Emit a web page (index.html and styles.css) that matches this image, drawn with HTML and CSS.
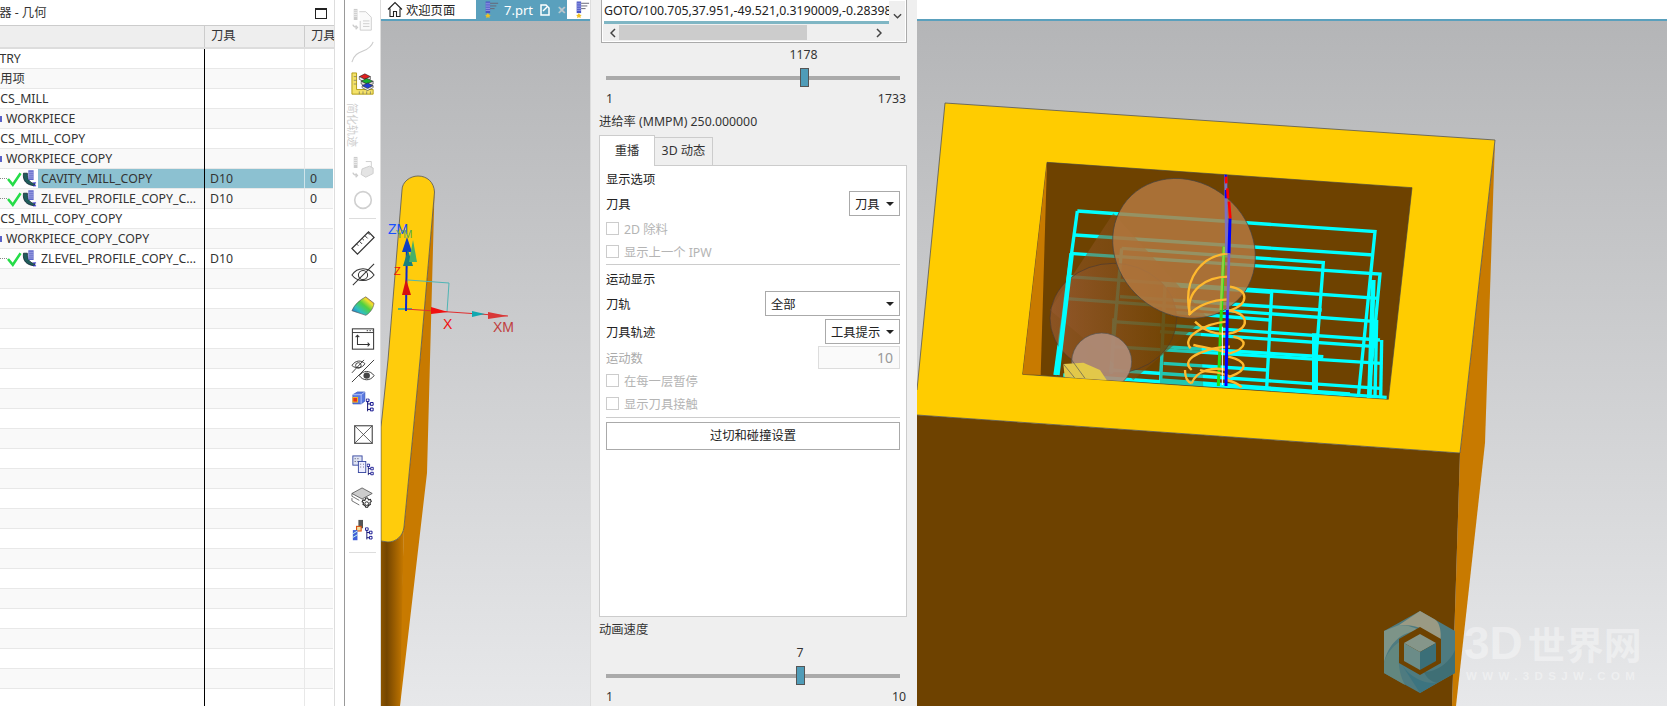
FILE: index.html
```html
<!DOCTYPE html>
<html lang="zh-CN">
<head>
<meta charset="utf-8">
<title>NX CAM</title>
<link rel="stylesheet" href="styles.css">
</head>
<body>
<svg class="defs" width="0" height="0" aria-hidden="true">
  <symbol id="op" viewBox="0 0 32 18">
    <path d="M1 9l5 6L14 3" fill="none" stroke="#25dc48" stroke-width="2.600"/>
    <path d="M17 3c-1 8 3 12 11 13l1-2c-5-1-8-4-8-11z" fill="#1f5d5a" stroke="#123" stroke-width=".8"/>
    <rect x="22" y="0" width="5.500" height="10" fill="#5a62c8"/>
    <path d="M22 2h5.500M22 4h5.500M22 6h5.500M22 8h5.500" stroke="#c8ccf0" stroke-width=".7"/>
    <path d="M27 13h3M27 16h3" stroke="#22c" stroke-width="1"/>
  </symbol>
  <symbol id="prt" viewBox="0 0 18 20">
    <rect x="3" y="1" width="5" height="13" fill="#4a55c4"/>
    <path d="M3 3h5M3 5h5M3 7h5M3 9h5M3 11h5" stroke="#aab0ee" stroke-width=".8"/>
    <path d="M8 3h9M8 6h7M8 9h5" stroke="#667" stroke-width="1.100"/>
    <path d="M5.500 14l1.200 2 2 .3-1.500 1.400.4 2-2.100-1-2.100 1 .4-2-1.500-1.400 2-.3z" fill="#f0c020"/>
  </symbol>
  <symbol id="tree" viewBox="0 0 9 16">
    <path d="M2 1v13M2 6h3M2 12h3" fill="none" stroke="#006" stroke-width="1"/>
    <path d="M0.500 .5h3v3h-3zM5 4.500h3v3H5zM5 10.500h3v3H5z" fill="#fff" stroke="#008" stroke-width="1"/>
  </symbol>
</svg>

<div class="app">
  <section class="nav">
    <header class="nav-title">
      <span class="nav-title-text">工序导航器 - 几何</span>
      <span class="maximize"></span>
    </header>
    <div class="tree-head">
      <div class="head-cell"></div>
      <div class="head-cell head-col">刀具</div>
      <div class="head-cell head-col">刀具</div>
    </div>
    <div class="tree">
      <div class="row"><div class="name"><span class="cut-geo">GEOMETRY</span></div><div class="col"></div><div class="col"></div></div>
      <div class="row"><div class="name"><span class="cut-unused">未用项</span></div><div class="col"></div><div class="col"></div></div>
      <div class="row"><div class="name"><span class="cut-mcs">MCS_MILL</span></div><div class="col"></div><div class="col"></div></div>
      <div class="row"><div class="name"><i class="wp"></i>WORKPIECE</div><div class="col"></div><div class="col"></div></div>
      <div class="row"><div class="name"><span class="cut-mcs">MCS_MILL_COPY</span></div><div class="col"></div><div class="col"></div></div>
      <div class="row"><div class="name"><i class="wp"></i>WORKPIECE_COPY</div><div class="col"></div><div class="col"></div></div>
      <div class="row selected"><div class="name"><i class="dots"></i><svg class="op"><use href="#op"/></svg><span class="op-label">CAVITY_MILL_COPY</span></div><div class="col">D10</div><div class="col">0</div></div>
      <div class="row"><div class="name"><i class="dots"></i><svg class="op"><use href="#op"/></svg><span class="op-label">ZLEVEL_PROFILE_COPY_C...</span></div><div class="col">D10</div><div class="col">0</div></div>
      <div class="row"><div class="name"><span class="cut-mcs">MCS_MILL_COPY_COPY</span></div><div class="col"></div><div class="col"></div></div>
      <div class="row"><div class="name"><i class="wp"></i>WORKPIECE_COPY_COPY</div><div class="col"></div><div class="col"></div></div>
      <div class="row"><div class="name"><i class="dots"></i><svg class="op"><use href="#op"/></svg><span class="op-label">ZLEVEL_PROFILE_COPY_C...</span></div><div class="col">D10</div><div class="col">0</div></div>
      <div class="row"><div class="name"></div><div class="col"></div><div class="col"></div></div>
      <div class="row"><div class="name"></div><div class="col"></div><div class="col"></div></div>
      <div class="row"><div class="name"></div><div class="col"></div><div class="col"></div></div>
      <div class="row"><div class="name"></div><div class="col"></div><div class="col"></div></div>
      <div class="row"><div class="name"></div><div class="col"></div><div class="col"></div></div>
      <div class="row"><div class="name"></div><div class="col"></div><div class="col"></div></div>
      <div class="row"><div class="name"></div><div class="col"></div><div class="col"></div></div>
      <div class="row"><div class="name"></div><div class="col"></div><div class="col"></div></div>
      <div class="row"><div class="name"></div><div class="col"></div><div class="col"></div></div>
      <div class="row"><div class="name"></div><div class="col"></div><div class="col"></div></div>
      <div class="row"><div class="name"></div><div class="col"></div><div class="col"></div></div>
      <div class="row"><div class="name"></div><div class="col"></div><div class="col"></div></div>
      <div class="row"><div class="name"></div><div class="col"></div><div class="col"></div></div>
      <div class="row"><div class="name"></div><div class="col"></div><div class="col"></div></div>
      <div class="row"><div class="name"></div><div class="col"></div><div class="col"></div></div>
      <div class="row"><div class="name"></div><div class="col"></div><div class="col"></div></div>
      <div class="row"><div class="name"></div><div class="col"></div><div class="col"></div></div>
      <div class="row"><div class="name"></div><div class="col"></div><div class="col"></div></div>
      <div class="row"><div class="name"></div><div class="col"></div><div class="col"></div></div>
      <div class="row"><div class="name"></div><div class="col"></div><div class="col"></div></div>
      <div class="row"><div class="name"></div><div class="col"></div><div class="col"></div></div>
      <div class="row"><div class="name"></div><div class="col"></div><div class="col"></div></div>
    </div>
  </section>

  <div class="spacer"></div>

  <aside class="toolbar">
    <div class="tool"><svg viewBox="0 0 26 26"><rect x="3" y="1" width="4" height="12" fill="#ccc"/><path d="M3 3h4M3 5h4M3 7h4M3 9h4" stroke="#eee"/><path d="M9 4h7l6 6v14H10V14" fill="#fafafa" stroke="#ccc"/><path d="M13 14h7M13 17h7M13 20h7" stroke="#ccc"/><path d="M2 18c1 3 3 3 5 3M5 23l2-2-2-2" fill="none" stroke="#ccc" stroke-width="1.400"/></svg></div>
    <div class="tool"><svg viewBox="0 0 26 26"><path d="M1 24C3 16 8 14 13 12s9-4 11-10" fill="none" stroke="#ccc" stroke-width="1.200"/></svg></div>
    <div class="tool"><svg viewBox="0 0 26 26"><path d="M1 1h5v18h18v5H1z" fill="#f4e26a" stroke="#b09a10"/><path d="M3 5h3M3 9h3M3 13h3M9 21v3M13 21v3M17 21v3M21 21v3" stroke="#666" stroke-width=".7"/><path d="M9 5l6-3 6 3-6 3z" fill="#e02020" stroke="#222" stroke-width=".6"/><path d="M9 5v3l6 3 6-3V5l-6 3z" fill="#e8e8e8" stroke="#222" stroke-width=".6"/><path d="M11 10l6-3 7 3-7 3z" fill="#18b030" stroke="#222" stroke-width=".6"/><path d="M11 10v3l6 3 7-3v-3l-7 3z" fill="#ddd" stroke="#222" stroke-width=".6"/><path d="M12 15l6-3 6 3-6 3z" fill="#2040d0" stroke="#222" stroke-width=".6"/><path d="M12 15v2l6 3 6-3v-2l-6 3z" fill="#fff" stroke="#222" stroke-width=".6"/></svg></div>
    <div class="tool tool-text">简化轨迹</div>
    <div class="tool tool-after-text"><svg viewBox="0 0 26 26"><rect x="3" y="1" width="4" height="12" fill="#ccc"/><path d="M3 3h4M3 5h4M3 7h4M3 9h4" stroke="#eee"/><path d="M12 14l8-3 4 2v6l-8 4-5-3z" fill="#e4e4e4" stroke="#ccc"/><path d="M16 6h6v6" fill="none" stroke="#ccc"/><path d="M2 18c1 3 3 3 5 3M5 23l2-2-2-2" fill="none" stroke="#ccc" stroke-width="1.400"/></svg></div>
    <div class="tool"><svg viewBox="0 0 26 26"><circle cx="13" cy="13" r="9" fill="none" stroke="#d0d0d0" stroke-width="1.800"/></svg></div>
    <div class="tb-sep"></div>
    <div class="tool tool-after-sep"><svg viewBox="0 0 26 26"><path d="M1 19L19 1l6 6L7 25z" fill="#fff" stroke="#333" stroke-width="1.300"/><path d="M6 14l2 2M9 11l3 3M12 8l2 2M15 5l3 3M18 2l2 2" stroke="#333"/></svg></div>
    <div class="tool"><svg viewBox="0 0 26 26"><path d="M1 13c6-9 18-9 24 0-6 8-18 8-24 0z" fill="none" stroke="#333" stroke-width="1.100"/><circle cx="13" cy="13" r="5" fill="none" stroke="#333" stroke-width="1.100"/><path d="M2 24L25 1" stroke="#333" stroke-width="1.100"/></svg></div>
    <div class="tool"><svg viewBox="0 0 26 26"><defs><linearGradient id="rb" x1="0" y1="1" x2="1" y2="0"><stop offset="0" stop-color="#2a50d0"/><stop offset=".3" stop-color="#30c0c0"/><stop offset=".55" stop-color="#50d040"/><stop offset=".75" stop-color="#f0e030"/><stop offset="1" stop-color="#e85020"/></linearGradient></defs><path d="M1 17C4 10 10 5 16 2l9 7c-1 6-5 11-9 13-5-2-10-3-15-5z" fill="url(#rb)" stroke="#555" stroke-width=".7"/></svg></div>
    <div class="tool"><svg viewBox="0 0 26 26"><rect x="1.500" y="2" width="23" height="22" fill="#fff" stroke="#333" stroke-width="1.100"/><path d="M1.500 6h23" stroke="#333"/><path d="M17 4h1.500M20 4h1.500M23 4h.5" stroke="#333"/><path d="M7 9v10h13M5 11l2-2 2 2M18 17l2 2-2 2" fill="none" stroke="#333" stroke-width="1.100"/></svg></div>
    <div class="tool"><svg viewBox="0 0 26 26"><path d="M1 7c4-6 10-6 14-2-2 5-10 6-14 2z" fill="none" stroke="#333"/><circle cx="8" cy="7" r="3" fill="none" stroke="#333"/><path d="M1 15L14 1M1 25L25 1" stroke="#333"/><path d="M9 18c4-6 12-6 16 0-4 6-12 6-16 0z" fill="#fff" stroke="#333"/><circle cx="17" cy="18" r="3.500" fill="#444"/></svg></div>
    <div class="tool"><svg viewBox="0 0 26 26"><path d="M2 4l5-3h8v10l-4 3H2z" fill="#5a78e0" stroke="#3050b0" stroke-width=".7"/><path d="M2 4h9v10M11 4l4-3" fill="none" stroke="#d0dcff" stroke-width=".8"/><rect x="2" y="7" width="5" height="5" fill="#e83020" stroke="#f0c020"/><use href="#tree" x="16" y="8" width="9" height="16"/></svg></div>
    <div class="tool"><svg viewBox="0 0 26 26"><rect x="4" y="3" width="19" height="19" fill="#fff" stroke="#444" stroke-width="1.200"/><path d="M4 3l19 19M23 3L4 22" stroke="#444" stroke-width=".9"/></svg></div>
    <div class="tool"><svg viewBox="0 0 26 26"><rect x="2" y="1" width="10" height="10" fill="#dfe4f4" stroke="#3848a0"/><path d="M4 4h1M7 4h1M4 7h1M7 7h1" stroke="#334"/><rect x="8" y="7" width="8" height="12" fill="#eef" stroke="#3848a0"/><path d="M10 10h1M13 10h1M10 13h1M13 13h1" stroke="#667"/><use href="#tree" x="17" y="9" width="8" height="15"/></svg></div>
    <div class="tool"><svg viewBox="0 0 26 26"><path d="M1 7l11-6 11 6-11 6z" fill="#ccc" stroke="#444" stroke-width=".8"/><path d="M1 7v3l8 4.500M1 12v3l8 4.500" fill="none" stroke="#444" stroke-width=".8"/><path d="M18 12l1 2 2-.5 1 2-1.500 1.500.5 2-2 1-1 2h-2l-1-2-2-1 .5-2L12 16l1-2 2 .5 1-2.500z" fill="#fff" stroke="#222" stroke-width="1.100"/><circle cx="17" cy="18" r="2" fill="#fff" stroke="#222" stroke-width="1"/></svg></div>
    <div class="tool"><svg viewBox="0 0 26 26"><path d="M8 1h5v9H8z" fill="#555"/><rect x="6" y="8" width="5" height="5" fill="#f0e0a0" stroke="#d85010" stroke-width="1.200"/><path d="M2 12h5v11H2z" fill="#4060d8"/><path d="M2 16l5-3M2 20l5-3" stroke="#cfe" /><use href="#tree" x="15" y="9" width="9" height="15"/></svg></div>
    <div class="tb-sep tb-sep-last"></div>
  </aside>

  <main class="main">
    <div class="tabs">
      <div class="tab">
        <svg class="home" viewBox="0 0 16 16"><path d="M1 8l7-7 7 7M3 7v8h3.500v-5h3v5H13V7" fill="none" stroke="#222" stroke-width="1.100"/></svg>
        <span>欢迎页面</span>
      </div>
      <div class="tab tab-active">
        <svg class="prt"><use href="#prt"/></svg>
        <span class="tab-name">7.prt</span>
        <svg class="tab-doc" viewBox="0 0 10 12"><path d="M1 1h5l3 3v7H1z" fill="none" stroke="#fff" stroke-width="1.500"/><path d="M3 7l4-4" stroke="#fff" stroke-width="1.500"/></svg>
        <span class="tab-x">✕</span>
      </div>
      <div class="tab tab-last"><svg class="prt"><use href="#prt"/></svg></div>
    </div>

    <div class="viewport">
      <svg class="scene" viewBox="381 21 1286 685" width="1286" height="685">
        <defs>
          <linearGradient id="cyl" x1="0" x2="1" y1="0" y2="0"><stop offset="0" stop-color="#8a5400"/><stop offset=".25" stop-color="#744500"/><stop offset="1" stop-color="#c87a00"/></linearGradient>
          <linearGradient id="cone" x1="0" x2="1" y1="0" y2="0"><stop offset="0" stop-color="#965a30"/><stop offset="1" stop-color="#6e4200"/></linearGradient>
          <clipPath id="pocket"><polygon points="141,67 1236,143 1165,778 68,703"/></clipPath>
        </defs>
        <!-- thin slab -->
        <path d="M434.500 192L430 360L427 473L400 706H398L404 527L420 360Z" fill="#c87a00"/>
        <path d="M381 541L388 542C396 542 403 536 404 527L400 706H381Z" fill="url(#cyl)"/>
        <path d="M402 190C402 182 410 176 418 176C427 176 434 182 434.500 192L420 360L404 527C403 536 396 542 388 542L381 541V427L388 360Z" fill="#ffcc0c" stroke="#555" stroke-width=".8"/>
        <!-- gizmo -->
        <path d="M408 280L449 283L447 312" fill="none" stroke="#4fb5b5" stroke-width="1"/>
        <path d="M398 309H412" stroke="#1aa" stroke-width="1.500"/>
        <path d="M405 309L450 312L508 316" fill="none" stroke="#e03030" stroke-width="1.200"/>
        <path d="M431 307L448 312L431 314Z" fill="#f01010"/>
        <path d="M472 311L485 314L472 317Z" fill="#10a8b0"/>
        <path d="M488 312L508 316L488 319Z" fill="#d83838"/>
        <path d="M406 311L407 240" stroke="#0a28d0" stroke-width="2"/>
        <path d="M407 237L412 252H402Z" fill="#1040c0"/>
        <path d="M408 250L413 266H403Z" fill="#18807e"/>
        <path d="M413 240L417 262H409Z" fill="#48b068"/>
        <path d="M406 279L411 295H402Z" fill="#d81010"/>
        <text x="388" y="234" class="g g-blue">ZM</text>
        <text x="396" y="238" class="g g-green">YM</text>
        <text x="394" y="275" class="g g-red g-small">Z</text>
        <text x="443" y="329" class="g g-red g-x">X</text>
        <text x="493" y="332" class="g g-dim">XM</text>

        <!-- block -->
        <polygon points="1495,140 1485,443 1456,706 1452,706 1460,453" fill="#c87a00"/>
        <polygon points="917,415 1460,453 1452,706 917,706" fill="#6e4200"/>
        <polygon points="945,103 1495,140 1460,453 917,415 917,390" fill="#ffcc00"/>
        <path d="M917 390L945 103L1495 140L1460 453L917 415" fill="none" stroke="#555" stroke-width=".8"/>

        <g transform="translate(1000 140) scale(.33333)">
          <polygon points="141,67 1236,143 1165,778 68,703" fill="#6e4200" stroke="#444" stroke-width="2"/>
          <polygon points="141,67 122,705 68,703" fill="#c87a00"/>
          <g clip-path="url(#pocket)">
            <g fill="none" stroke="#00ffff" stroke-width="10">
              <path d="M232 213L1125 275L1075 770"/>
              <path d="M232 213L165 705"/>
              <path d="M225 285L1120 345"/>
              <path d="M210 340L1140 402L1105 775"/>
              <path d="M205 410L1135 475"/>
              <path d="M190 475L1130 545"/>
              <path d="M340 545L1140 600"/>
              <path d="M335 620L1145 670"/>
              <path d="M330 690L1140 745"/>
              <path d="M190 705L1160 772"/>
              <path d="M365 325L970 368L940 760"/>
              <path d="M365 325L332 700"/>
              <path d="M495 435L815 457L800 745"/>
              <path d="M495 435L482 725"/>
              <path d="M490 515L810 540"/>
              <path d="M490 670L800 690"/>
              <path d="M360 470L965 510"/>
              <path d="M480 575L1130 620"/>
              <path d="M490 620L970 650"/>
              <path d="M480 720L1050 762"/>
              <path d="M1145 600L1142 775"/>
            </g>
            <g fill="none" stroke="#00ffff">
              <path d="M945 580L945 760" stroke-width="18"/>
              <path d="M1120 420L1108 775" stroke-width="14"/>
              <path d="M1130 540L1125 775" stroke-width="10"/>
              <path d="M342 535L335 700" stroke-width="10"/>
            </g>
            <path d="M340 220L150 510L400 720L620 530Z" fill="url(#cone)" opacity=".55"/>
            <ellipse cx="340" cy="535" rx="190" ry="165" fill="url(#cone)" fill-opacity=".72" stroke="#4a3a30" stroke-width="2"/>
            <path d="M600 520L610 745H480V510Z" fill="#6e4200" opacity=".3"/>
            <path d="M215 340L172 705" fill="none" stroke="#00ffff" stroke-width="14"/>
            <ellipse cx="305" cy="665" rx="90" ry="86" fill="#b08c78" fill-opacity=".92" stroke="#555" stroke-width="2"/>
            <path d="M190 672L250 668L300 690L320 720H195Z" fill="#e2c84a"/>
            <path d="M190 672L225 715M215 660L255 715" stroke="#555" stroke-width="2" fill="none"/>
            <ellipse cx="552" cy="325" rx="224" ry="199" transform="rotate(40 552 325)" fill="#b67a42" fill-opacity=".82" stroke="#444" stroke-width="2"/>
            <path d="M672 320L655 738" stroke="#22e010" stroke-width="9"/>
            <path d="M672 320L662 510" stroke="#90d040" stroke-width="7"/>
            <g fill="none" stroke="#ffb92e" stroke-width="7">
              <path d="M688 340C610 345 545 410 570 525"/>
              <path d="M685 410C620 410 555 450 570 525"/>
              <path d="M685 478C625 480 590 500 566 525"/>
              <path d="M690 440C745 450 750 490 690 512C745 522 750 560 700 578C650 590 610 570 585 545"/>
              <path d="M680 545C620 550 540 590 572 625"/>
              <path d="M700 590C745 600 740 625 690 640C640 625 600 620 580 615"/>
              <path d="M690 620C640 620 530 650 575 690"/>
              <path d="M685 650C745 665 745 690 690 710C650 690 630 700 600 690"/>
              <path d="M555 690C555 710 560 725 575 730"/>
              <path d="M575 730C590 690 640 680 680 690"/>
              <path d="M680 720C700 725 715 730 725 742"/>
            </g>
            <path d="M677 100L680 340" stroke="#7a70c0" stroke-width="9"/>
            <path d="M690 235L687 340" stroke="#0000ff" stroke-width="9"/>
            <path d="M677 100L678 125M678 150V175" stroke="#0000ff" stroke-width="7"/>
            <path d="M678 110L679 130M682 145L684 175M687 185L691 235" stroke="#ff0000" stroke-width="8"/>
            <path d="M687 340L683 510" stroke="#7a60c8" stroke-width="8"/>
            <path d="M682 510L678 738" stroke="#0000ff" stroke-width="9"/>
            <path d="M667 560V735" stroke="#fff" stroke-width="3"/>
          </g>
        </g>

        <!-- watermark logo -->
        <polygon points="1420,611 1455,631 1455,673 1420,693 1384,673 1384,631" fill="#4e7b80"/>
        <path d="M1420 611L1399 625C1425 624 1440 637 1438 655C1443 637 1441 622 1434 619Z" fill="#9a9a84"/>
        <path d="M1399 625L1384 631V663C1388 644 1402 630 1421 631C1416 628 1408 625 1399 625Z" fill="#7d9488"/>
        <path d="M1384 663V673L1405 685C1396 668 1398 650 1404 639C1393 645 1386 654 1384 663Z" fill="#62877f"/>
        <path d="M1402 665L1420 693L1437 683C1424 684 1411 678 1402 665Z" fill="#3c7480"/>
        <path d="M1424 672C1437 672 1450 662 1455 650V673L1437 683C1430 681 1426 677 1424 672Z" fill="#3f6f75"/>
        <polygon points="1420,627 1441,639 1441,663 1420,675 1399,663 1399,639" fill="#6e4200"/>
        <polygon points="1420,634 1436,643 1420,652 1404,643" fill="#85968a"/>
        <polygon points="1404,643 1420,652 1420,670 1404,661" fill="#6b8c88"/>
        <polygon points="1436,643 1420,652 1420,670 1436,661" fill="#3b6f78"/>
      </svg>

      <div class="wm">
        <div class="wm-main"><span class="wm-3d">3D</span><span class="wm-cn">世界网</span></div>
        <div class="wm-url">WWW.3DSJW.COM</div>
      </div>
    </div>

    <div class="dialog">
      <div class="listbox">
        <div class="list-top">
          <div class="list-text"><span class="list-line">GOTO/100.705,37.951,-49.521,0.3190009,-0.2839842</span></div>
          <div class="vbar"><svg viewBox="0 0 10 6" class="chev"><path d="M1 1l4 4 4-4" fill="none" stroke="#444" stroke-width="1.500"/></svg></div>
        </div>
        <div class="hbar">
          <svg viewBox="0 0 6 10" class="chev-h"><path d="M5 1L1 5l4 4" fill="none" stroke="#444" stroke-width="1.500"/></svg>
          <div class="hthumb"></div>
          <svg viewBox="0 0 6 10" class="chev-h chev-r"><path d="M1 1l4 4-4 4" fill="none" stroke="#444" stroke-width="1.500"/></svg>
        </div>
      </div>

      <div class="slider slider-first">
        <div class="s-top"><span class="s-val" style="left:67.200%">1178</span></div>
        <div class="s-track"><i class="s-handle" style="left:67.400%"></i></div>
        <div class="s-ends"><span>1</span><span>1733</span></div>
      </div>

      <div class="feed">进给率 (MMPM) 250.000000</div>

      <div class="dtabs">
        <div class="dtab dtab-on">重播</div>
        <div class="dtab">3D 动态</div>
      </div>
      <div class="dbody">
        <div class="lbl lbl-first">显示选项</div>
        <div class="form-row"><span>刀具</span><div class="sel sel-s">刀具<i></i></div></div>
        <div class="check check-first"><i></i>2D 除料</div>
        <div class="check"><i></i>显示上一个 IPW</div>
        <div class="sep"></div>
        <div class="lbl lbl-sec">运动显示</div>
        <div class="form-row"><span>刀轨</span><div class="sel sel-l">全部<i></i></div></div>
        <div class="form-row form-row-tight"><span>刀具轨迹</span><div class="sel sel-m">工具提示<i></i></div></div>
        <div class="form-row form-row-num"><span class="off">运动数</span><div class="num">10</div></div>
        <div class="check"><i></i>在每一层暂停</div>
        <div class="check"><i></i>显示刀具接触</div>
        <div class="sep sep-low"></div>
        <div class="btn">过切和碰撞设置</div>
      </div>

      <div class="speed">动画速度</div>
      <div class="slider slider-speed">
        <div class="s-top"><span class="s-val" style="left:66%">7</span></div>
        <div class="s-track"><i class="s-handle" style="left:66%"></i></div>
        <div class="s-ends"><span>1</span><span>10</span></div>
      </div>
    </div>
  </main>
</div>
</body>
</html>
```

FILE: styles.css
```css
* { box-sizing: border-box; }
html, body { margin: 0; height: 100%; overflow: hidden; background: #fff; }
body {
  font-family: "Noto Sans", "Noto Sans CJK SC", sans-serif;
  font-size: 12.300px;
  color: #333;
}
.defs { position: absolute; }
.app { display: flex; height: 706px; width: 1667px; overflow: hidden; }

/* navigator */
.nav { width: 335px; flex: none; border-right: 1px solid #ddd; display: flex; flex-direction: column; overflow: hidden; }
.nav-title { height: 26px; flex: none; display: flex; align-items: center; justify-content: space-between; padding-right: 7px; border-bottom: 1px solid #ccc; white-space: nowrap; }
.nav-title-text { margin-left: -50px; padding-bottom: 1px; }
.maximize { width: 12px; height: 11px; border: 1px solid #222; border-top-width: 2px; margin-top: 1px; }
.tree-head { height: 23px; flex: none; display: grid; grid-template-columns: 204px 100px 30px; background: #eee; border-bottom: 2px solid #ddd; margin-top: 0; }
.head-col { border-left: 1px solid #ccc; padding-left: 6px; line-height: 20px; overflow: hidden; white-space: nowrap; }
.tree { position: relative; flex: 1; overflow: hidden; }
.tree::after { content: ""; position: absolute; left: 204px; top: 0; bottom: 0; width: 1px; background: #000; }
.row { display: grid; grid-template-columns: 204px 100px 29px; height: 20px; border-bottom: 1px solid #e8e8e8; width: 333px; line-height: 19px; }
.row:nth-child(even) { background: #f9f9f9; }
.name { display: flex; align-items: center; white-space: nowrap; overflow: hidden; height: 19px; }
.col { border-left: 1px solid #e8e8e8; padding-left: 5px; height: 19px; }
.cut-geo { margin-left: -44px; }
.cut-unused { margin-left: -12px; }
.cut-mcs { margin-left: -11px; }
.wp { width: 2px; height: 6px; background: #5a62c8; margin-right: 4px; flex: none; }
.dots { width: 7px; border-top: 1px dotted #888; flex: none; }
.op { width: 31px; height: 18px; flex: none; }
.op-label { flex: 1; height: 19px; padding-left: 3px; }
.selected { background: transparent; }
.selected .op-label, .selected .col { background: #8cc1d1; }
.selected .col { border-left-color: #cfe4ea; }

/* toolbar */
.spacer { width: 9px; flex: none; }
.toolbar { width: 37px; flex: none; border-left: 1px solid #999; padding-top: 4px; border-right: 1px solid #ddd; }
.tool { height: 32px; display: flex; align-items: center; justify-content: center; }
.tool svg { width: 24px; height: 24px; }
.tool-text { height: 50px; writing-mode: vertical-rl; text-orientation: sideways; color: #cfcfcf; font-size: 11px; white-space: nowrap; }
.tool-after-text { margin-top: 2px; }
.tb-sep { height: 1px; background: #ddd; margin: 2px 4px 0; }
.tool-after-sep { margin-top: 8px; }
.tb-sep-last { margin-top: 5px; }

/* main area */
.main { position: relative; flex: 1; display: flex; flex-direction: column; min-width: 0; }
.tabs { height: 21px; flex: none; display: flex; border-bottom: 2px solid #5aa0bd; }
.tab { width: 95px; display: flex; align-items: center; padding-left: 6px; gap: 3px; color: #222; height: 19px; }
.home { width: 16px; height: 17px; }
.tab-active { width: 91px; background: #5aa0bd; color: #fff; padding-left: 7px; gap: 0; }
.tab-last { width: 23px; padding-left: 7px; }
.prt { width: 16px; height: 19px; flex: none; }
.tab-name { margin-left: 5px; font-size: 13px; }
.tab-doc { width: 10px; height: 12px; margin-left: 7px; }
.tab-x { margin-left: 7px; color: #bcc8cf; font-size: 11px; font-weight: bold; }
.viewport { position: relative; flex: 1; background: linear-gradient(#b4b5b7, #e7e8ea); overflow: hidden; }
.scene { position: absolute; left: 0; top: 0; display: block; }
.g { font-family: "Liberation Sans", sans-serif; font-size: 14px; }
.g-blue { fill: #1a50ff; }
.g-green { fill: #58a858; font-size: 11px; }
.g-red { fill: #f01010; }
.g-small { font-size: 11px; }
.g-dim { fill: #c04040; }

/* watermark */
.wm { position: absolute; left: 1083px; top: 601px; color: rgba(255,255,255,.38); white-space: nowrap; font-family: "Liberation Sans", "Noto Sans CJK SC", sans-serif; font-weight: bold; }
.wm-main { height: 42px; display: flex; align-items: center; line-height: 42px; }
.wm-3d { font-size: 46px; }
.wm-cn { font-size: 38px; margin-left: 5px; font-family: "Noto Sans CJK SC", sans-serif; }
.wm-url { font-size: 11.500px; letter-spacing: 5.400px; line-height: 14px; margin-top: 5px; padding-left: 2px; font-weight: bold; }

/* dialog */
.dialog { position: absolute; left: 209px; top: 0; width: 327px; height: 706px; background: #efefef; border-left: 1px solid #ddd; display: flex; flex-direction: column; padding: 0 10px 0 8px; }
.listbox { height: 43px; margin: 0 0 0 2px; border: 1px solid #aaa; border-top: 0; box-shadow: inset 0 0 0 1px #fff; padding: 0 1px 1px; flex: none; }
.list-top { display: flex; height: 24px; }
.list-text { flex: 1; background: #fff; overflow: hidden; white-space: nowrap; padding-left: 1px; min-width: 0; }
.list-line { display: block; height: 24px; line-height: 22px; color: #222; border-bottom: 3px solid #7fb6c4; }
.vbar { width: 16px; flex: none; display: flex; justify-content: center; padding-top: 13px; }
.chev { width: 9px; height: 6px; }
.hbar { height: 17px; display: flex; align-items: center; padding-left: 7px; }
.chev-h { width: 6px; height: 10px; flex: none; }
.hthumb { width: 188px; height: 15px; background: #ccc; margin-left: 3px; }
.chev-r { margin-left: 69px; }

.slider { flex: none; padding: 0 0 0 7px; width: 301px; }
.slider-first { margin-top: 3px; }
.s-top { position: relative; height: 17px; }
.s-val { position: absolute; top: 0; transform: translateX(-50%); line-height: 17px; }
.s-track { position: relative; height: 19px; margin-top: 5px; }
.s-track::before { content: ""; position: absolute; left: 0; right: 0; top: 8px; height: 4px; background: #aaa; }
.s-handle { position: absolute; top: 0; width: 9px; height: 19px; margin-left: -4px; background: #4f9cb8; border: 1px solid #555; }
.s-ends { display: flex; justify-content: space-between; margin-top: 4px; line-height: 16px; margin-right: -6px; }

.feed { margin-top: 6px; height: 18px; line-height: 18px; flex: none; }
.dtabs { display: flex; margin-top: 3px; height: 31px; position: relative; flex: none; align-items: flex-end; }
.dtab { height: 28px; width: 58px; border: 1px solid #ccc; border-left: 0; border-bottom: 0; text-align: center; line-height: 26px; }
.dtab-on { width: 56px; height: 31px; background: #fff; border: 1px solid #ccc; border-bottom: 0; margin-bottom: -1px; position: relative; z-index: 1; line-height: 29px; }
.dbody { height: 452px; flex: none; width: 308px; background: #fff; border: 1px solid #ccc; padding: 0 6px; }
.lbl { height: 18px; line-height: 18px; color: #222; }
.lbl-first { margin-top: 5px; margin-bottom: 2px; }
.lbl-sec { margin-top: 6px; margin-bottom: 2px; }
.form-row { display: flex; justify-content: space-between; align-items: center; height: 25px; color: #222; }
.form-row-tight { margin-top: 3px; }
.form-row-num { margin-top: 2px; height: 23px; }
.off { color: #aaa; }
.sel { height: 25px; border: 1px solid #aaa; display: flex; align-items: center; justify-content: space-between; padding: 0 5px; color: #222; }
.sel i { width: 0; height: 0; border-left: 4px solid transparent; border-right: 4px solid transparent; border-top: 4px solid #222; margin-right: 0; }
.sel-s { width: 51px; }
.sel-l { width: 135px; }
.sel-m { width: 75px; }
.num { width: 82px; height: 23px; background: #fafafa; border: 1px solid #ddd; text-align: right; padding-right: 6px; font-size: 14px; line-height: 21px; color: #999; }
.check { height: 23px; display: flex; align-items: center; color: #b4b4b4; }
.check-first { margin-top: 1px; }
.check i { width: 13px; height: 13px; border: 1px solid #ccc; margin-right: 5px; flex: none; }
.sep { height: 1px; background: #ccc; margin-top: 1px; }
.sep-low { margin-top: 2px; }
.btn { height: 28px; margin-top: 4px; border: 1px solid #aaa; text-align: center; line-height: 26px; color: #222; }
.speed { margin-top: 4px; height: 18px; line-height: 18px; flex: none; }
.slider-speed { margin-top: 5px; }
```
